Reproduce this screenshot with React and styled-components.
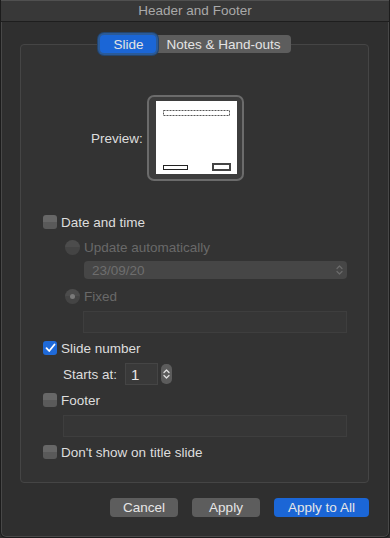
import React from 'react';
import styled, { createGlobalStyle } from 'styled-components';

const GlobalStyle = createGlobalStyle`
  html, body {
    margin: 0;
    padding: 0;
    background: #2e2e2e;
  }
  body {
    font-family: "Liberation Sans", Arial, sans-serif;
    font-size: 13.5px;
    -webkit-font-smoothing: antialiased;
  }
`;

const Window = styled.div`
  width: 390px;
  height: 538px;
  box-sizing: border-box;
  display: flex;
  flex-direction: column;
  background: #2f2f2f;
  border: 1px solid #1c1c1c;
  border-top: none;
  border-radius: 0 0 6px 6px;
  box-shadow: inset 1px 0 0 #484848, inset -1px 0 0 #484848, inset 0 -1px 0 #484848;
  overflow: hidden;
`;

const TitleBar = styled.div`
  height: 21px;
  flex-shrink: 0;
  display: flex;
  align-items: center;
  justify-content: center;
  background: #383838;
  border-bottom: 1px solid #1e1e1e;
  box-shadow: inset 0 1px 0 #505050;
  color: #a9a9a9;
  font-size: 13.5px;
`;

const Body = styled.div`
  display: flex;
  flex-direction: column;
  padding: 13px 20px 0 19px;
`;

const TabRow = styled.div`
  display: flex;
  justify-content: center;
  position: relative;
  z-index: 1;
  margin-left: 2px;
  height: 18px;
`;

const Segmented = styled.div`
  display: flex;
  background: #5d5d5d;
  border-radius: 4px;
  height: 18px;
`;

const Segment = styled.div`
  display: flex;
  align-items: center;
  justify-content: center;
  padding: 0 ${(p) => p.$pad}px;
  height: 18px;
  color: #e4e4e4;
  font-size: 13.5px;
  border-radius: 4px;
  background: ${(p) => (p.$active ? '#1b66d6' : 'transparent')};
  box-shadow: ${(p) => (p.$active ? '0 0 0 2px #2b5a97, 0 0 0 3px #23456f' : 'none')};
`;

const Group = styled.div`
  margin-top: -9px;
  height: 439px;
  box-sizing: border-box;
  border: 1px solid #454545;
  border-radius: 4px;
  background: #333333;
  padding: 0 21px 0 22px;
  display: flex;
  flex-direction: column;
`;

const PreviewRow = styled.div`
  margin-top: 50px;
  margin-left: 48px;
  display: flex;
  align-items: center;
  gap: 4px;
  height: 86px;
`;

const Label = styled.span`
  color: ${(p) => (p.$disabled ? '#696969' : '#dedede')};
  font-size: 13.5px;
  white-space: nowrap;
`;

const PreviewFrame = styled.div`
  width: 97px;
  height: 86px;
  box-sizing: border-box;
  border: 2px solid #6b6b6b;
  border-radius: 7px;
  background: #3d3d3d;
  padding: 4px 5px 5px 7px;
  display: flex;
`;

const Slide = styled.div`
  flex: 1;
  background: #ffffff;
  display: flex;
`;

const Row = styled.div`
  display: flex;
  align-items: center;
  gap: ${(p) => p.$gap ?? 4}px;
  height: 22px;
  margin-top: ${(p) => p.$mt ?? 0}px;
  margin-left: ${(p) => p.$indent ?? 0}px;
`;

const Check = styled.div`
  width: 14px;
  height: 14px;
  border-radius: 3px;
  flex-shrink: 0;
  display: flex;
  align-items: center;
  justify-content: center;
  background: ${(p) =>
    p.$checked ? '#1f6ad9' : 'linear-gradient(#676767 0%, #676767 50%, #5a5a5a 50%, #5a5a5a 100%)'};
`;

const Radio = styled.div`
  width: 15px;
  height: 15px;
  border-radius: 50%;
  flex-shrink: 0;
  display: flex;
  align-items: center;
  justify-content: center;
  background: linear-gradient(#4c4c4c 0%, #4c4c4c 50%, #444444 50%, #444444 100%);
  &::after {
    content: '';
    width: 5px;
    height: 5px;
    border-radius: 50%;
    background: ${(p) => (p.$on ? '#7a7a7a' : 'transparent')};
  }
`;

const Popup = styled.div`
  margin-top: 3px;
  margin-left: 41px;
  height: 18px;
  border-radius: 4px;
  background: #464646;
  display: flex;
  align-items: center;
  justify-content: space-between;
  padding: 0 4px 0 8px;
  color: #6e6e6e;
  font-size: 13.5px;
`;

const Field = styled.div`
  margin-top: ${(p) => p.$mt ?? 4}px;
  margin-left: ${(p) => p.$indent}px;
  height: 22px;
  box-sizing: border-box;
  border: 1px solid #3e3e3e;
  background: #363636;
`;

const NumberBox = styled.div`
  width: 33px;
  height: 22px;
  box-sizing: border-box;
  border: 1px solid #454545;
  background: #393939;
  color: #e8e8e8;
  display: flex;
  align-items: center;
  padding-left: 5px;
  font-size: 15px;
`;

const Stepper = styled.div`
  width: 11px;
  height: 20px;
  border-radius: 5px;
  background: #5c5c5c;
  margin-left: 3px;
  display: flex;
  align-items: center;
  justify-content: center;
`;

const ButtonBar = styled.div`
  display: flex;
  justify-content: flex-end;
  gap: 14px;
  margin-top: 15px;
`;

const Button = styled.div`
  height: 19px;
  width: ${(p) => p.$w}px;
  border-radius: 4px;
  display: flex;
  align-items: center;
  justify-content: center;
  background: ${(p) => (p.$primary ? '#1b66d6' : '#5d5d5d')};
  color: #e6e6e6;
  font-size: 13.5px;
`;

const Chevrons = ({ color = '#e0e0e0' }) => (
  <svg width="7" height="12" viewBox="0 0 7 12" fill="none" stroke={color} strokeWidth="1.3" strokeLinecap="round" strokeLinejoin="round">
    <path d="M1 4.5 L3.5 2 L6 4.5" />
    <path d="M1 7.5 L3.5 10 L6 7.5" />
  </svg>
);

const CheckMark = () => (
  <svg width="11" height="10" viewBox="0 0 11 10" fill="none" stroke="#ffffff" strokeWidth="1.8" strokeLinecap="round" strokeLinejoin="round">
    <path d="M1.5 5.2 L4.2 8 L9.5 1.5" />
  </svg>
);

const SlideDrawing = () => (
  <svg width="81" height="74" viewBox="0 0 81 74">
    <rect x="7.5" y="9.5" width="66" height="5" fill="none" stroke="#555" strokeWidth="1" strokeDasharray="2 1" />
    <rect x="7.5" y="64.5" width="24" height="4" fill="none" stroke="#222" strokeWidth="1" />
    <rect x="57" y="63" width="17" height="6" fill="#ffffff" stroke="#444" strokeWidth="2" />
  </svg>
);

const App = () => (
  <>
    <GlobalStyle />
    <Window>
      <TitleBar>Header and Footer</TitleBar>
      <Body>
        <TabRow>
          <Segmented>
            <Segment $active $pad={13}>Slide</Segment>
            <Segment $pad={10}>Notes &amp; Hand-outs</Segment>
          </Segmented>
        </TabRow>
        <Group>
          <PreviewRow>
            <Label>Preview:</Label>
            <PreviewFrame>
              <Slide>
                <SlideDrawing />
              </Slide>
            </PreviewFrame>
          </PreviewRow>

          <Row $mt={30}>
            <Check />
            <Label>Date and time</Label>
          </Row>
          <Row $mt={3} $indent={22}>
            <Radio />
            <Label $disabled>Update automatically</Label>
          </Row>
          <Popup>
            <span>23/09/20</span>
            <Chevrons color="#6a6a6a" />
          </Popup>
          <Row $mt={6} $indent={22}>
            <Radio $on />
            <Label $disabled>Fixed</Label>
          </Row>
          <Field $indent={40} />

          <Row $mt={4}>
            <Check $checked>
              <CheckMark />
            </Check>
            <Label>Slide number</Label>
          </Row>
          <Row $mt={4} $indent={20} $gap={0}>
            <Label>Starts at:</Label>
            <NumberBox style={{ marginLeft: 8 }}>1</NumberBox>
            <Stepper>
              <Chevrons />
            </Stepper>
          </Row>
          <Row $mt={4}>
            <Check />
            <Label>Footer</Label>
          </Row>
          <Field $indent={20} />
          <Row $mt={4}>
            <Check />
            <Label>Don't show on title slide</Label>
          </Row>
        </Group>
        <ButtonBar>
          <Button $w={68}>Cancel</Button>
          <Button $w={68}>Apply</Button>
          <Button $w={95} $primary>Apply to All</Button>
        </ButtonBar>
      </Body>
    </Window>
  </>
);

export default App;
